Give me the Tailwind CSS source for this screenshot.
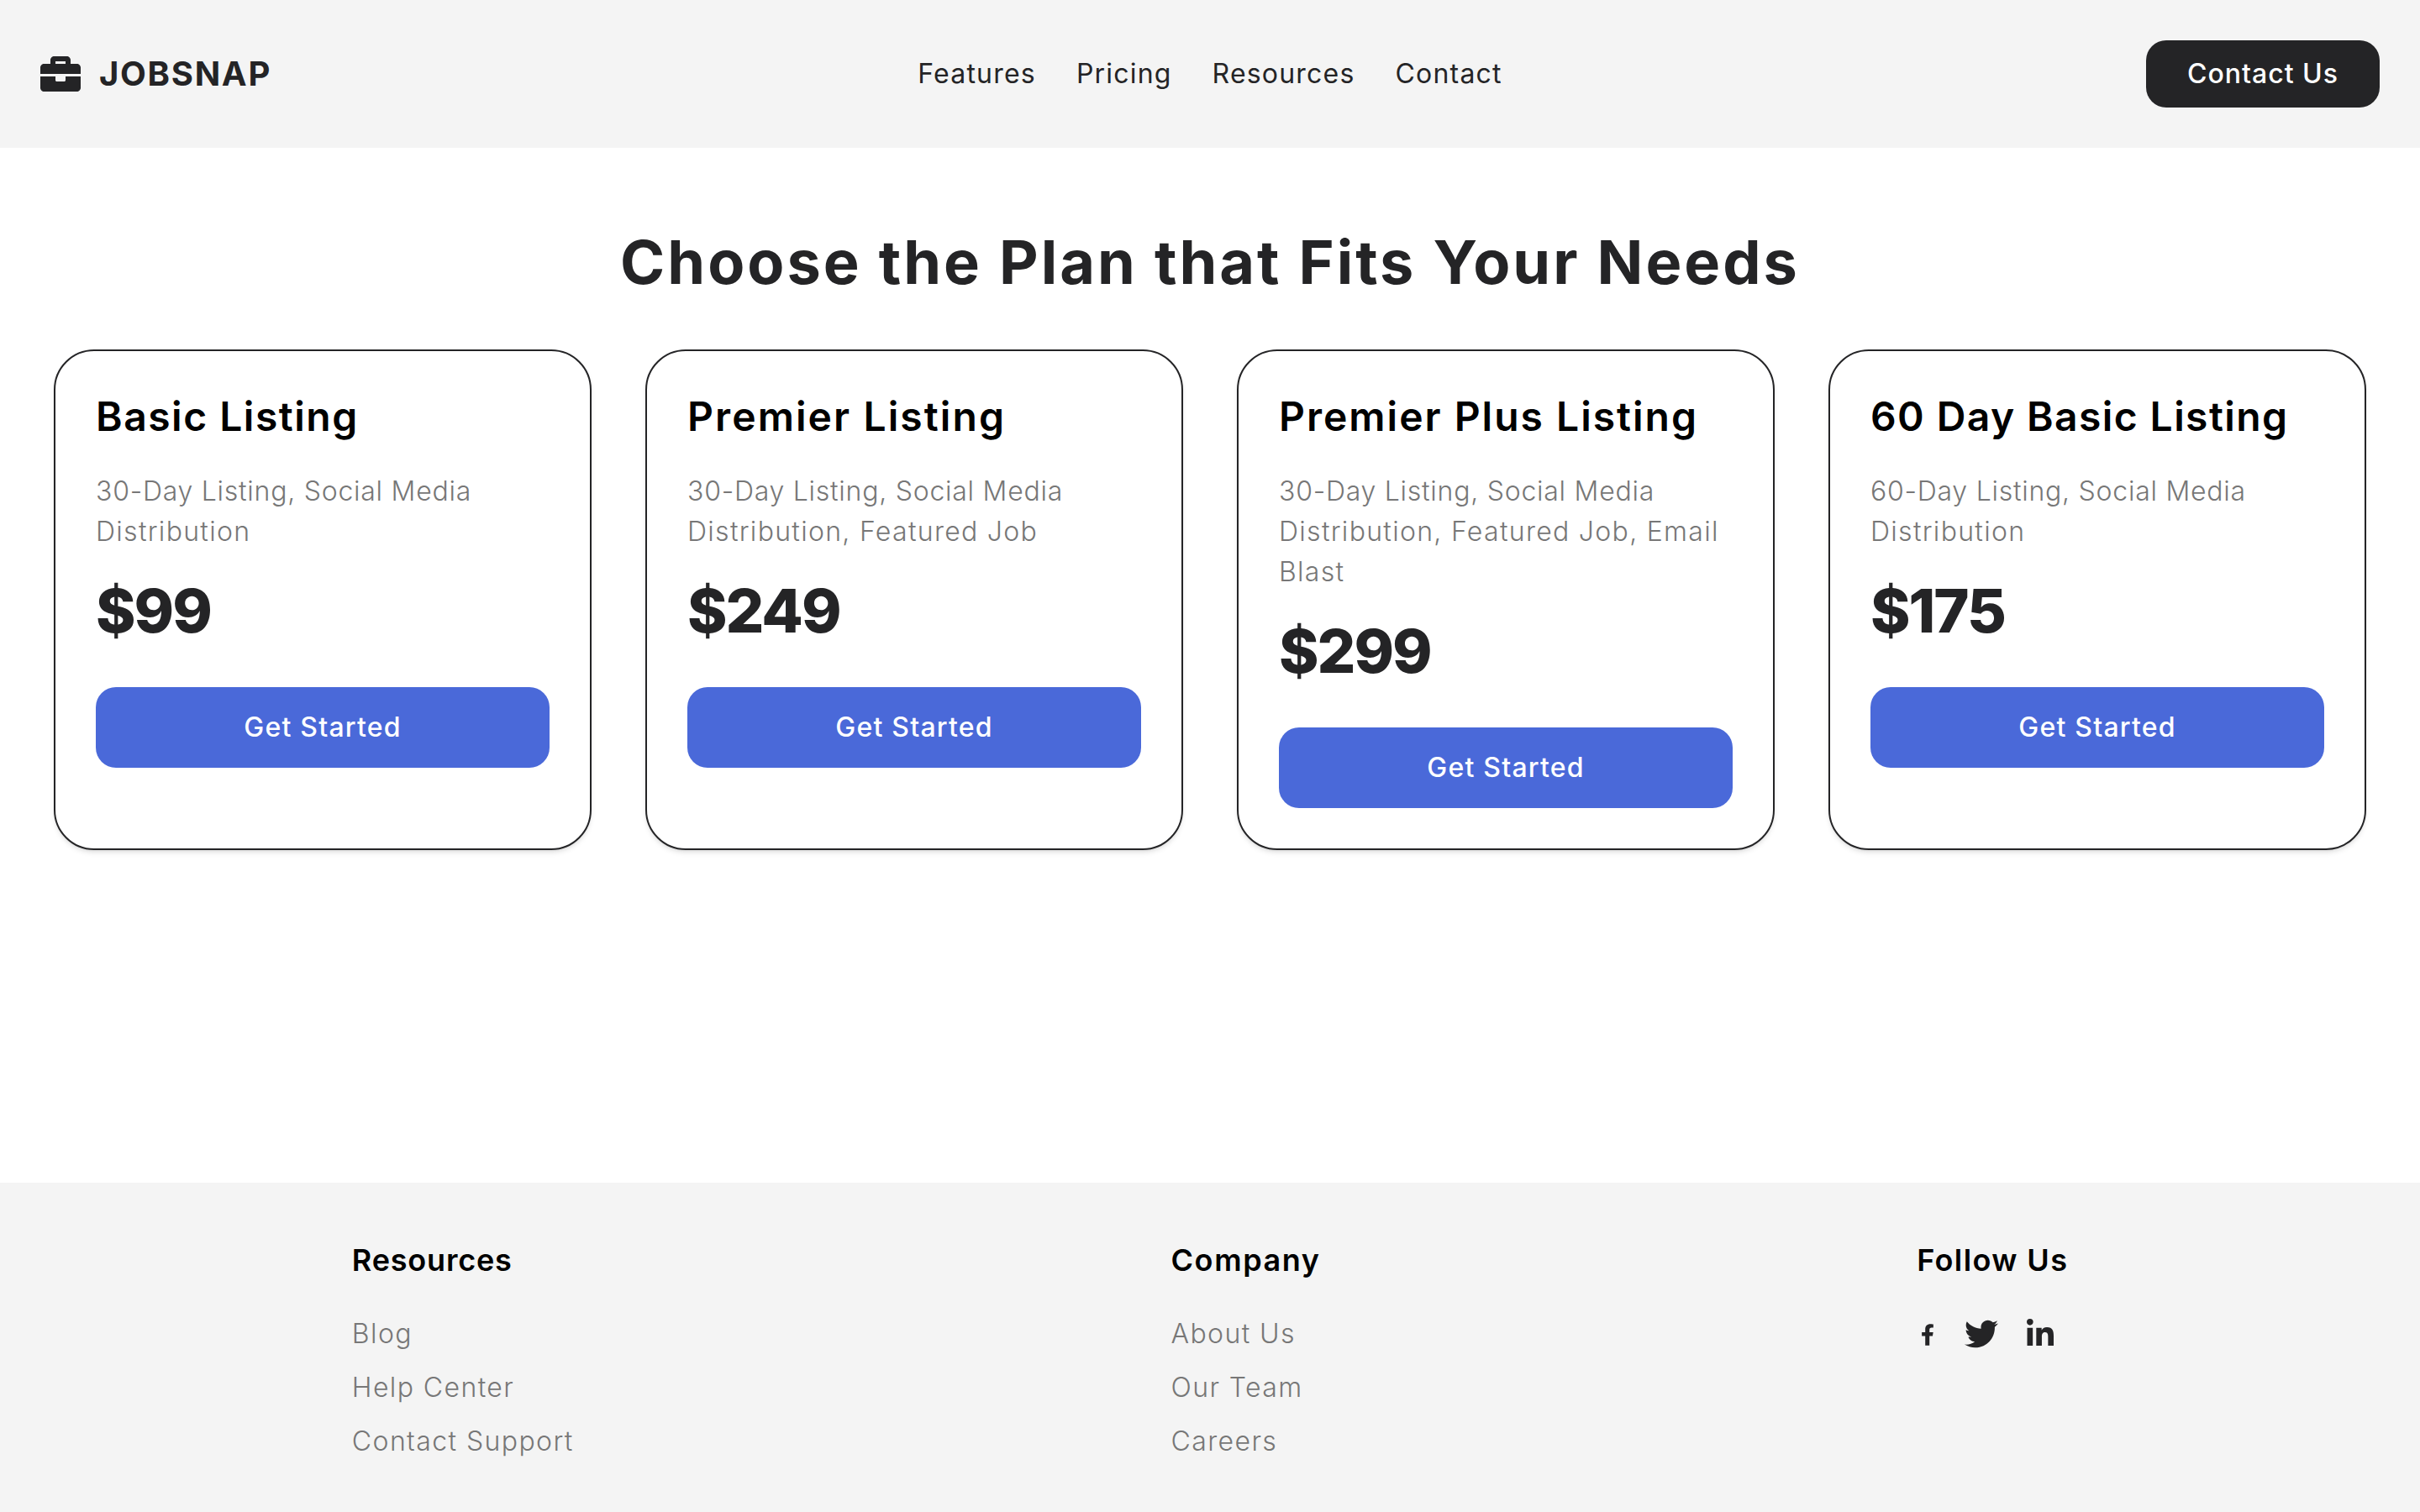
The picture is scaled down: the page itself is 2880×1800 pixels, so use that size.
<!doctype html>
<html>
<head>
<meta charset="UTF-8">
<title>JobSnap Pricing</title>
<script src="https://cdn.jsdelivr.net/npm/@tailwindcss/browser@4"></script>
</head>
<body class="font-['Inter',sans-serif] bg-white">
<div class="min-h-[1800px] flex flex-col">
  <header class="h-[176px] bg-[#f4f4f4] px-12 flex items-center justify-between">
    <div class="flex items-center gap-[22px] w-[500px]">
      <svg class="w-12 h-12 fill-[#242426]" viewBox="0 0 512 512"><path d="M320 336c0 8.84-7.16 16-16 16h-96c-8.84 0-16-7.16-16-16v-48H0v144c0 25.6 22.4 48 48 48h416c25.6 0 48-22.4 48-48V288H320v48zm144-208h-80V80c0-25.6-22.4-48-48-48H176c-25.6 0-48 22.4-48 48v48H48c-25.6 0-48 22.4-48 48v80h512v-80c0-25.6-22.4-48-48-48zm-144 0H192V96h128v32z"/></svg>
      <span class="text-[40px] font-bold text-[#242426] tracking-[1.7px]">JOBSNAP</span>
    </div>
    <nav class="flex gap-12 text-[32px] text-[#242426] tracking-[1.2px]">
      <a>Features</a><a>Pricing</a><a>Resources</a><a>Contact</a>
    </nav>
    <div class="w-[500px] flex justify-end">
      <button class="h-20 w-[278px] bg-[#242426] rounded-3xl text-white text-[32px] font-medium tracking-[1px]">Contact Us</button>
    </div>
  </header>

  <main class="grow px-16 pt-[88px]">
    <h1 class="text-[72px] leading-[96px] font-bold text-[#242426] text-center tracking-[3px] mb-14">Choose the Plan that Fits Your Needs</h1>
    <div class="grid grid-cols-4 gap-16">
      <div class="bg-white border-2 border-[#242426] rounded-[48px] px-12 pt-12 pb-12 shadow-md">
        <h2 class="text-[48px] leading-[60px] font-semibold text-black tracking-[1.5px]">Basic Listing</h2>
        <p class="mt-[35px] text-[32px] leading-[48px] font-light text-[#777] tracking-[1.3px]"><span class="tracking-[0.75px]">30-Day Listing, Social Media</span> Distribution</p>
        <div class="mt-[22px] text-[72px] leading-[96px] font-extrabold text-[#242426] tracking-[-2px]">$99</div>
        <button class="mt-[43px] w-full h-24 bg-[#4a69d9] rounded-3xl text-white text-[32px] font-medium tracking-[1.2px]">Get Started</button>
      </div>
      <div class="bg-white border-2 border-[#242426] rounded-[48px] px-12 pt-12 pb-12 shadow-md">
        <h2 class="text-[48px] leading-[60px] font-semibold text-black tracking-[2.1px]">Premier Listing</h2>
        <p class="mt-[35px] text-[32px] leading-[48px] font-light text-[#777] tracking-[1.3px]"><span class="tracking-[0.75px]">30-Day Listing, Social Media</span> Distribution, Featured Job</p>
        <div class="mt-[22px] text-[72px] leading-[96px] font-extrabold text-[#242426] tracking-[-2px]">$249</div>
        <button class="mt-[43px] w-full h-24 bg-[#4a69d9] rounded-3xl text-white text-[32px] font-medium tracking-[1.2px]">Get Started</button>
      </div>
      <div class="bg-white border-2 border-[#242426] rounded-[48px] px-12 pt-12 pb-12 shadow-md">
        <h2 class="text-[48px] leading-[60px] font-semibold text-black tracking-[2px]">Premier Plus Listing</h2>
        <p class="mt-[35px] text-[32px] leading-[48px] font-light text-[#777] tracking-[1.3px]"><span class="tracking-[0.75px]">30-Day Listing, Social Media</span> Distribution, Featured Job, Email Blast</p>
        <div class="mt-[22px] text-[72px] leading-[96px] font-extrabold text-[#242426] tracking-[-2px]">$299</div>
        <button class="mt-[43px] w-full h-24 bg-[#4a69d9] rounded-3xl text-white text-[32px] font-medium tracking-[1.2px]">Get Started</button>
      </div>
      <div class="bg-white border-2 border-[#242426] rounded-[48px] px-12 pt-12 pb-12 shadow-md">
        <h2 class="text-[48px] leading-[60px] font-semibold text-black tracking-[1.4px]">60 Day Basic Listing</h2>
        <p class="mt-[35px] text-[32px] leading-[48px] font-light text-[#777] tracking-[1.3px]"><span class="tracking-[0.75px]">60-Day Listing, Social Media</span> Distribution</p>
        <div class="mt-[22px] text-[72px] leading-[96px] font-extrabold text-[#242426] tracking-[-2px]">$175</div>
        <button class="mt-[43px] w-full h-24 bg-[#4a69d9] rounded-3xl text-white text-[32px] font-medium tracking-[1.2px]">Get Started</button>
      </div>
    </div>
  </main>

  <footer class="h-[392px] bg-[#f4f4f4] px-16 pt-[68px] flex justify-around">
    <div class="w-[265px]">
      <h3 class="text-[36px] leading-[48px] font-semibold text-black tracking-[0.8px]">Resources</h3>
      <ul class="mt-10 flex flex-col gap-4 text-[32px] leading-[48px] font-light text-[#777] tracking-[1.4px]">
        <li>Blog</li><li>Help Center</li><li>Contact Support</li>
      </ul>
    </div>
    <div class="w-[178px]">
      <h3 class="text-[36px] leading-[48px] font-semibold text-black tracking-[1.6px]">Company</h3>
      <ul class="mt-10 flex flex-col gap-4 text-[32px] leading-[48px] font-light text-[#777] tracking-[1.4px]">
        <li>About Us</li><li>Our Team</li><li>Careers</li>
      </ul>
    </div>
    <div class="w-[180px]">
      <h3 class="text-[36px] leading-[48px] font-semibold text-black tracking-[1.4px] whitespace-nowrap">Follow Us</h3>
      <div class="mt-10 h-12 flex items-center pl-[5px] fill-[#242426]">
        <svg class="w-[16px] h-[26px] mt-[2px]" viewBox="0 0 320 512"><path d="M279.14 288l14.22-92.66h-88.91v-60.13c0-25.35 12.42-50.06 52.24-50.06h40.42V6.26S260.43 0 225.36 0c-73.22 0-121.08 44.38-121.08 124.72v70.62H22.89V288h81.39v224h100.17V288z"/></svg>
        <svg class="ml-[36px] w-[40px] h-[40px]" viewBox="0 0 512 512"><path d="M459.37 151.716c.325 4.548.325 9.097.325 13.645 0 138.72-105.583 298.558-298.558 298.558-59.452 0-114.68-17.219-161.137-47.106 8.447.974 16.568 1.299 25.34 1.299 49.055 0 94.213-16.568 130.274-44.832-46.132-.975-84.792-31.188-98.112-72.772 6.498.974 12.995 1.624 19.818 1.624 9.421 0 18.843-1.3 27.614-3.573-48.081-9.747-84.143-51.98-84.143-102.985v-1.299c13.969 7.797 30.214 12.67 47.431 13.319-28.264-18.843-46.781-51.005-46.781-87.391 0-19.492 5.197-37.36 14.294-52.954 51.655 63.675 129.3 105.258 216.365 109.807-1.624-7.797-2.599-15.918-2.599-24.04 0-57.828 46.782-104.934 104.934-104.934 30.213 0 57.502 12.67 76.67 33.137 23.715-4.548 46.456-13.32 66.599-25.34-7.798 24.366-24.366 44.833-46.132 57.827 21.117-2.273 41.584-8.122 60.426-16.243-14.292 20.791-32.161 39.308-52.628 54.253z"/></svg>
        <svg class="ml-[34px] mb-[4px] w-[32px] h-[32px]" viewBox="0 0 448 448"><path d="M100.28 448H7.4V148.9h92.88zM53.79 108.1C24.09 108.1 0 83.5 0 53.8a53.79 53.79 0 0 1 107.58 0c0 29.7-24.1 54.3-53.79 54.3zM447.9 448h-92.68V302.4c0-34.7-.7-79.2-48.29-79.2-48.29 0-55.69 37.7-55.69 76.7V448h-92.78V148.9h89.08v40.8h1.3c12.4-23.5 42.69-48.3 87.88-48.3 94 0 111.28 61.9 111.28 142.3V448z"/></svg>
      </div>
    </div>
  </footer>
</div>
</body>
</html>
